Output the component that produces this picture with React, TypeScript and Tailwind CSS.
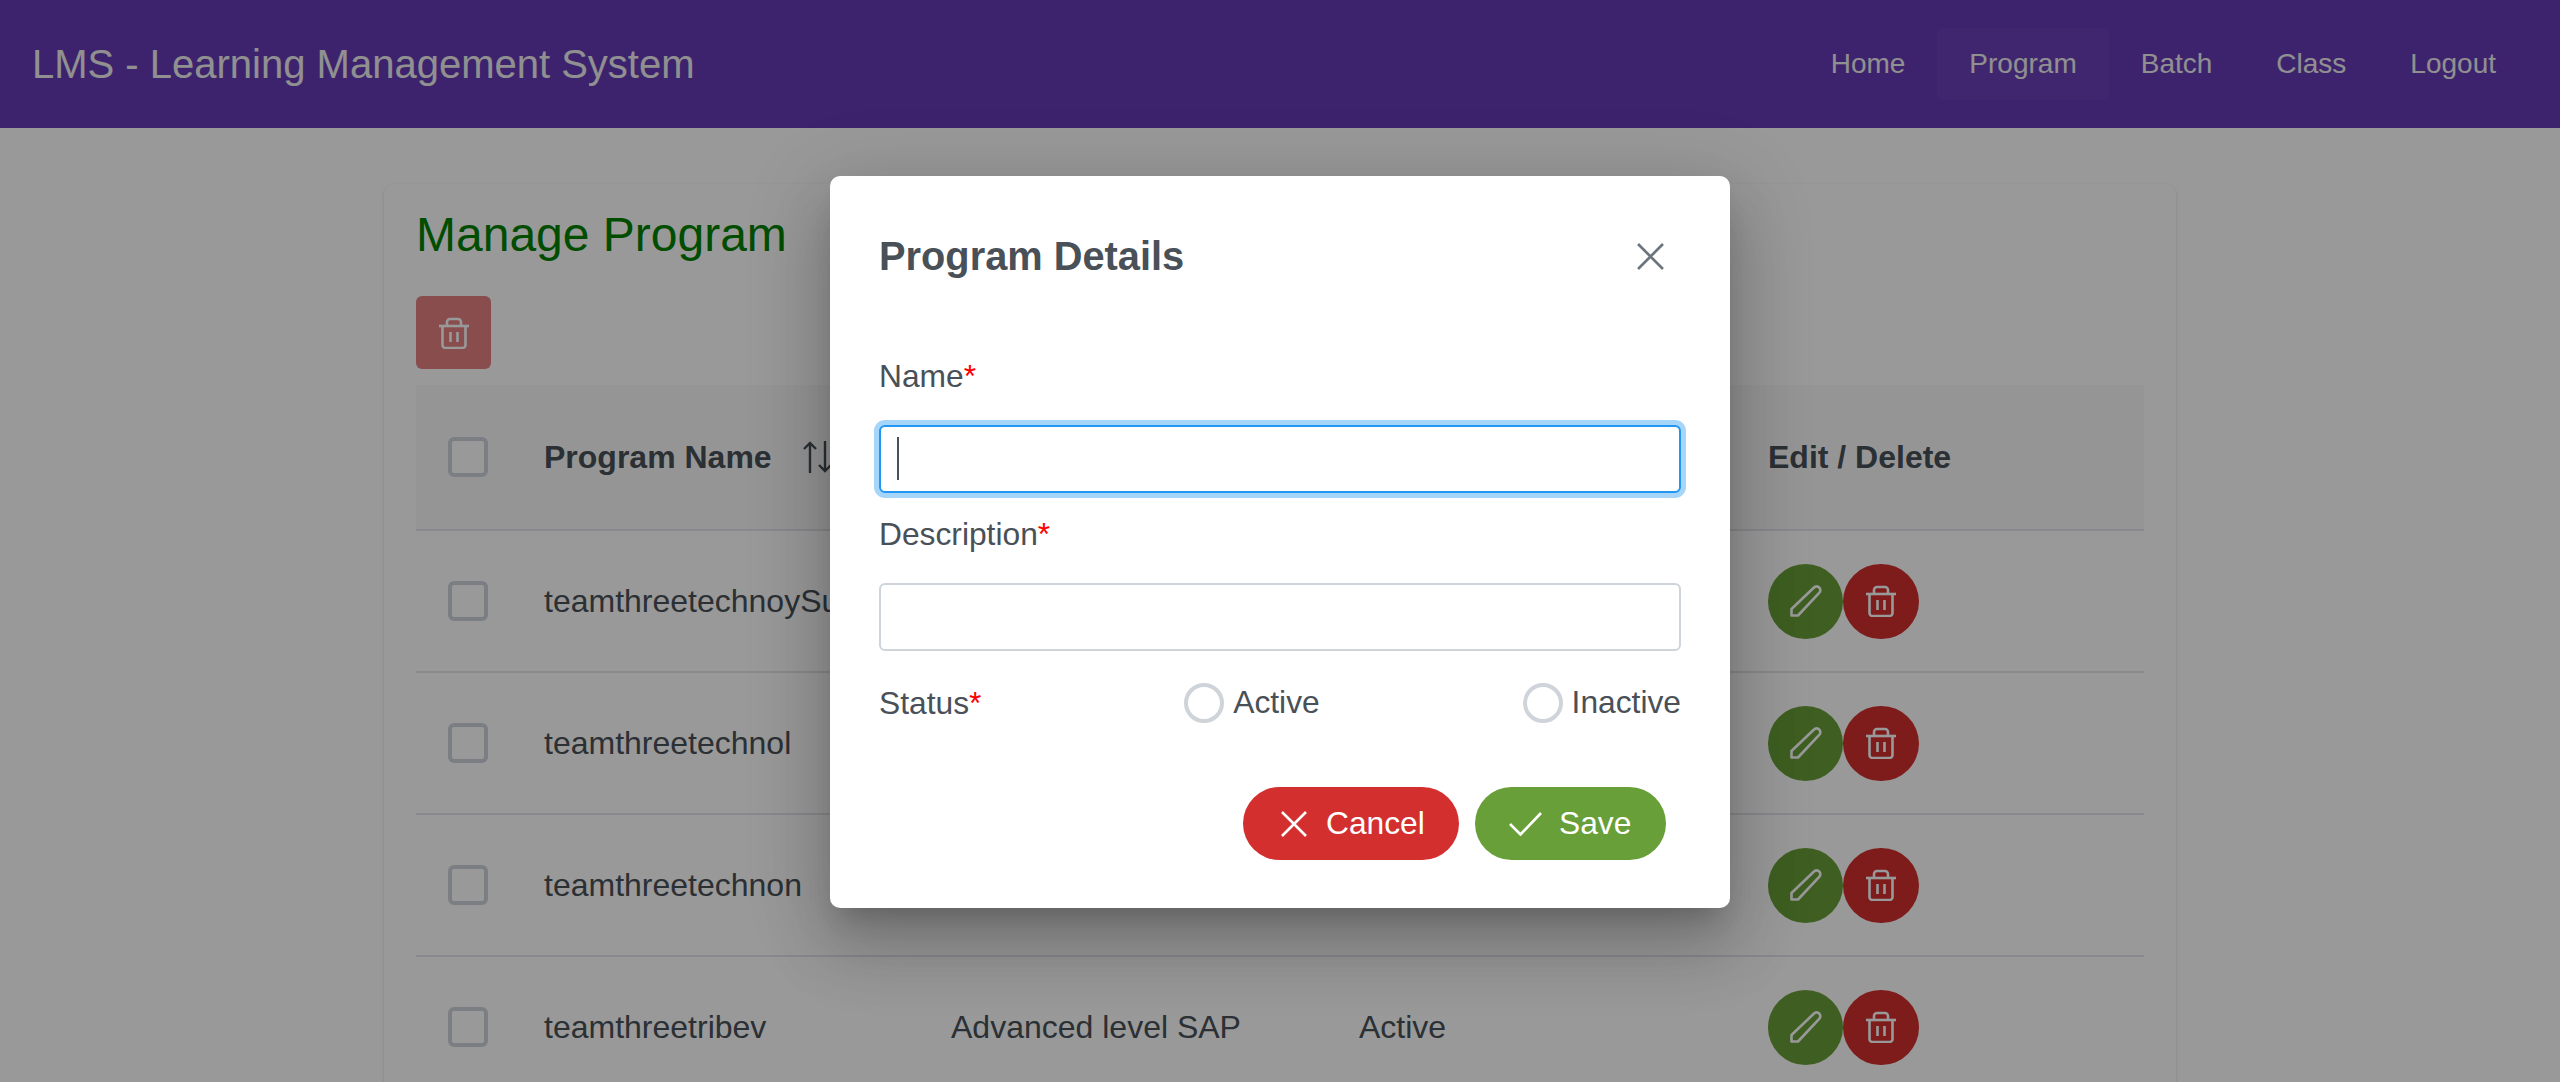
import { useId } from "react";

const rows = [
  { name: "teamthreetechnoySupport", description: "", status: "" },
  { name: "teamthreetechnol", description: "", status: "" },
  { name: "teamthreetechnon", description: "", status: "" },
  { name: "teamthreetribev", description: "Advanced level SAP", status: "Active" },
];

function TrashIcon({ className }: { className?: string }) {
  return (
    <svg viewBox="0 0 32 32" fill="none" stroke="currentColor" strokeWidth="2.6" strokeLinejoin="round" className={className}>
      <path d="M1 9h30" />
      <path d="M9 9V5a3 3 0 0 1 3-3h8a3 3 0 0 1 3 3v4" />
      <path d="M4.5 9v19a3 3 0 0 0 3 3h17a3 3 0 0 0 3-3V9" />
      <path d="M12.5 15v10M19.5 15v10" />
    </svg>
  );
}

function PencilIcon({ className }: { className?: string }) {
  return (
    <svg viewBox="0 0 32 32" fill="none" stroke="currentColor" strokeWidth="2.6" strokeLinejoin="round" className={className}>
      <path d="M1.5 30.5v-6.5L24 2.5a3.6 3.6 0 0 1 5.2 0 3.8 3.8 0 0 1 0 5.4L8 30.5z" />
    </svg>
  );
}

function TimesIcon({ className }: { className?: string }) {
  return (
    <svg viewBox="0 0 26 26" fill="none" stroke="currentColor" strokeWidth="2.6" className={className}>
      <path d="M1 1l24 24M25 1L1 25" />
    </svg>
  );
}

function CheckIcon({ className }: { className?: string }) {
  return (
    <svg viewBox="0 0 33 24" fill="none" stroke="currentColor" strokeWidth="2.6" className={className}>
      <path d="M1 12l10.5 10.5L32 1" />
    </svg>
  );
}

function Checkbox() {
  return <div className="h-10 w-10 rounded-[6px] border-[4px] border-[#ced4da] bg-white" />;
}

function Row({ name, description, status }: { name: string; description: string; status: string }) {
  return (
    <div className="grid h-[142px] grid-cols-[97px_407px_408px_409px_407px] items-center border-b-2 border-[#e2e5e9] text-[32px] text-[#495057]">
      <div className="pl-8">
        <Checkbox />
      </div>
      <div className="whitespace-nowrap pl-[31px]">{name}</div>
      <div className="pl-[31px]">{description}</div>
      <div className="pl-[31px]">{status}</div>
      <div className="flex pl-[31px]">
        <button className="flex h-[75px] w-[75px] items-center justify-center rounded-full bg-[#689f38] text-white">
          <PencilIcon className="h-8 w-8" />
        </button>
        <button className="flex h-[75px] w-[76px] items-center justify-center rounded-full bg-[#d32f2f] text-white">
          <TrashIcon className="h-8 w-8" />
        </button>
      </div>
    </div>
  );
}

function Label({ text, htmlFor }: { text: string; htmlFor?: string }) {
  return (
    <label htmlFor={htmlFor} className="block leading-9">
      {text}
      <span className="text-[#ff0000]">*</span>
    </label>
  );
}

function Radio({ label }: { label: string }) {
  return (
    <div className="flex items-center gap-[9px]">
      <div className="h-10 w-10 rounded-full border-[4px] border-[#ced4da] bg-white" />
      <span>{label}</span>
    </div>
  );
}

export default function App() {
  const nameId = useId();
  const descriptionId = useId();

  return (
    <div className="relative h-screen overflow-hidden bg-white font-['Liberation_Sans',Arial,sans-serif]">
      <nav className="flex h-[128px] items-center justify-between bg-[#673ab7] pl-8 pr-8 text-[#f0f0f0]">
        <span className="text-[40px]">LMS - Learning Management System</span>
        <div className="flex text-[28px]">
          <a className="flex h-[72px] items-center px-8">Home</a>
          <a className="flex h-[72px] items-center rounded-[6px] bg-white/[0.03] px-8">Program</a>
          <a className="flex h-[72px] items-center px-8">Batch</a>
          <a className="flex h-[72px] items-center px-8">Class</a>
          <a className="flex h-[72px] items-center px-8">Logout</a>
        </div>
      </nav>

      <main className="mx-auto mt-[56px] w-[1792px] rounded-[10px] bg-white px-8 pt-[23px] shadow-[0_1px_3px_0_rgba(0,0,0,0.16)]">
        <h1 className="text-[48px] leading-[56px] text-[#008000]">Manage Program</h1>
        <button className="mt-[33px] flex h-[73px] w-[75px] items-center justify-center rounded-[6px] bg-[#d32f2f] text-white opacity-60">
          <TrashIcon className="h-8 w-8" />
        </button>
        <div className="mt-4">
          <div className="grid h-[146px] grid-cols-[97px_407px_408px_409px_407px] items-center border-b-2 border-[#e2e5e9] bg-[#f8f9fa] text-[32px] font-bold text-[#495057]">
            <div className="pl-8">
              <Checkbox />
            </div>
            <div className="flex items-center gap-[31px] whitespace-nowrap pl-[31px]">
              Program Name
              <svg viewBox="0 0 30 32" fill="none" stroke="currentColor" strokeWidth="2.4" className="h-8 w-[30px] shrink-0">
                <path d="M7 32V2M1 8l6-6 6 6M22 0v30M16 24l6 6 6-6" />
              </svg>
            </div>
            <div />
            <div />
            <div className="pl-[31px]">Edit / Delete</div>
          </div>
          {rows.map((row) => (
            <Row key={row.name} {...row} />
          ))}
        </div>
      </main>

      <div className="absolute inset-0 flex items-center justify-center bg-black/40">
        <div className="mt-[2px] w-[900px] rounded-[10px] bg-white text-[31.75px] text-[#495057] shadow-[0_19px_26px_-12px_rgba(0,0,0,0.2),0_42px_66px_5px_rgba(0,0,0,0.14),0_16px_80px_14px_rgba(0,0,0,0.12)]">
          <div className="flex items-center justify-between py-[49px] pl-[49px] pr-[66px]">
            <h2 className="text-[39.8px] font-bold leading-[62px]">Program Details</h2>
            <TimesIcon className="h-[27px] w-[27px] text-[#6c757d]" />
          </div>
          <div className="px-[49px] pb-[48px]">
            <div className="mt-[22px]">
              <Label text="Name" htmlFor={nameId} />
            </div>
            <div className="relative mt-[31px]">
              <input id={nameId} className="block h-[68px] w-full rounded-[6px] border-2 border-[#2196f3] bg-white px-[16px] shadow-[0_0_0_5px_#a6d5fa] outline-none" />
              <span className="absolute left-[18px] top-[12px] h-[43px] w-[2px] bg-[#495057]" />
            </div>
            <div className="mt-[23px]">
              <Label text="Description" htmlFor={descriptionId} />
            </div>
            <input id={descriptionId} className="mt-[31px] block h-[68px] w-full rounded-[6px] border-2 border-[#ced4da] bg-white px-[16px] outline-none" />
            <div className="mt-[32px] flex h-10 items-center justify-between">
              <Label text="Status" />
              <Radio label="Active" />
              <Radio label="Inactive" />
            </div>
            <div className="mr-[15px] mt-[64px] flex justify-end gap-4">
              <button className="flex h-[73px] w-[216px] items-center gap-[19px] rounded-full bg-[#d32f2f] pl-[38px] text-white">
                <TimesIcon className="h-[26px] w-[26px]" />
                Cancel
              </button>
              <button className="flex h-[73px] w-[191px] items-center gap-[17px] rounded-full bg-[#689f38] pl-[34px] text-white">
                <CheckIcon className="h-6 w-[33px]" />
                Save
              </button>
            </div>
          </div>
        </div>
      </div>
    </div>
  );
}
